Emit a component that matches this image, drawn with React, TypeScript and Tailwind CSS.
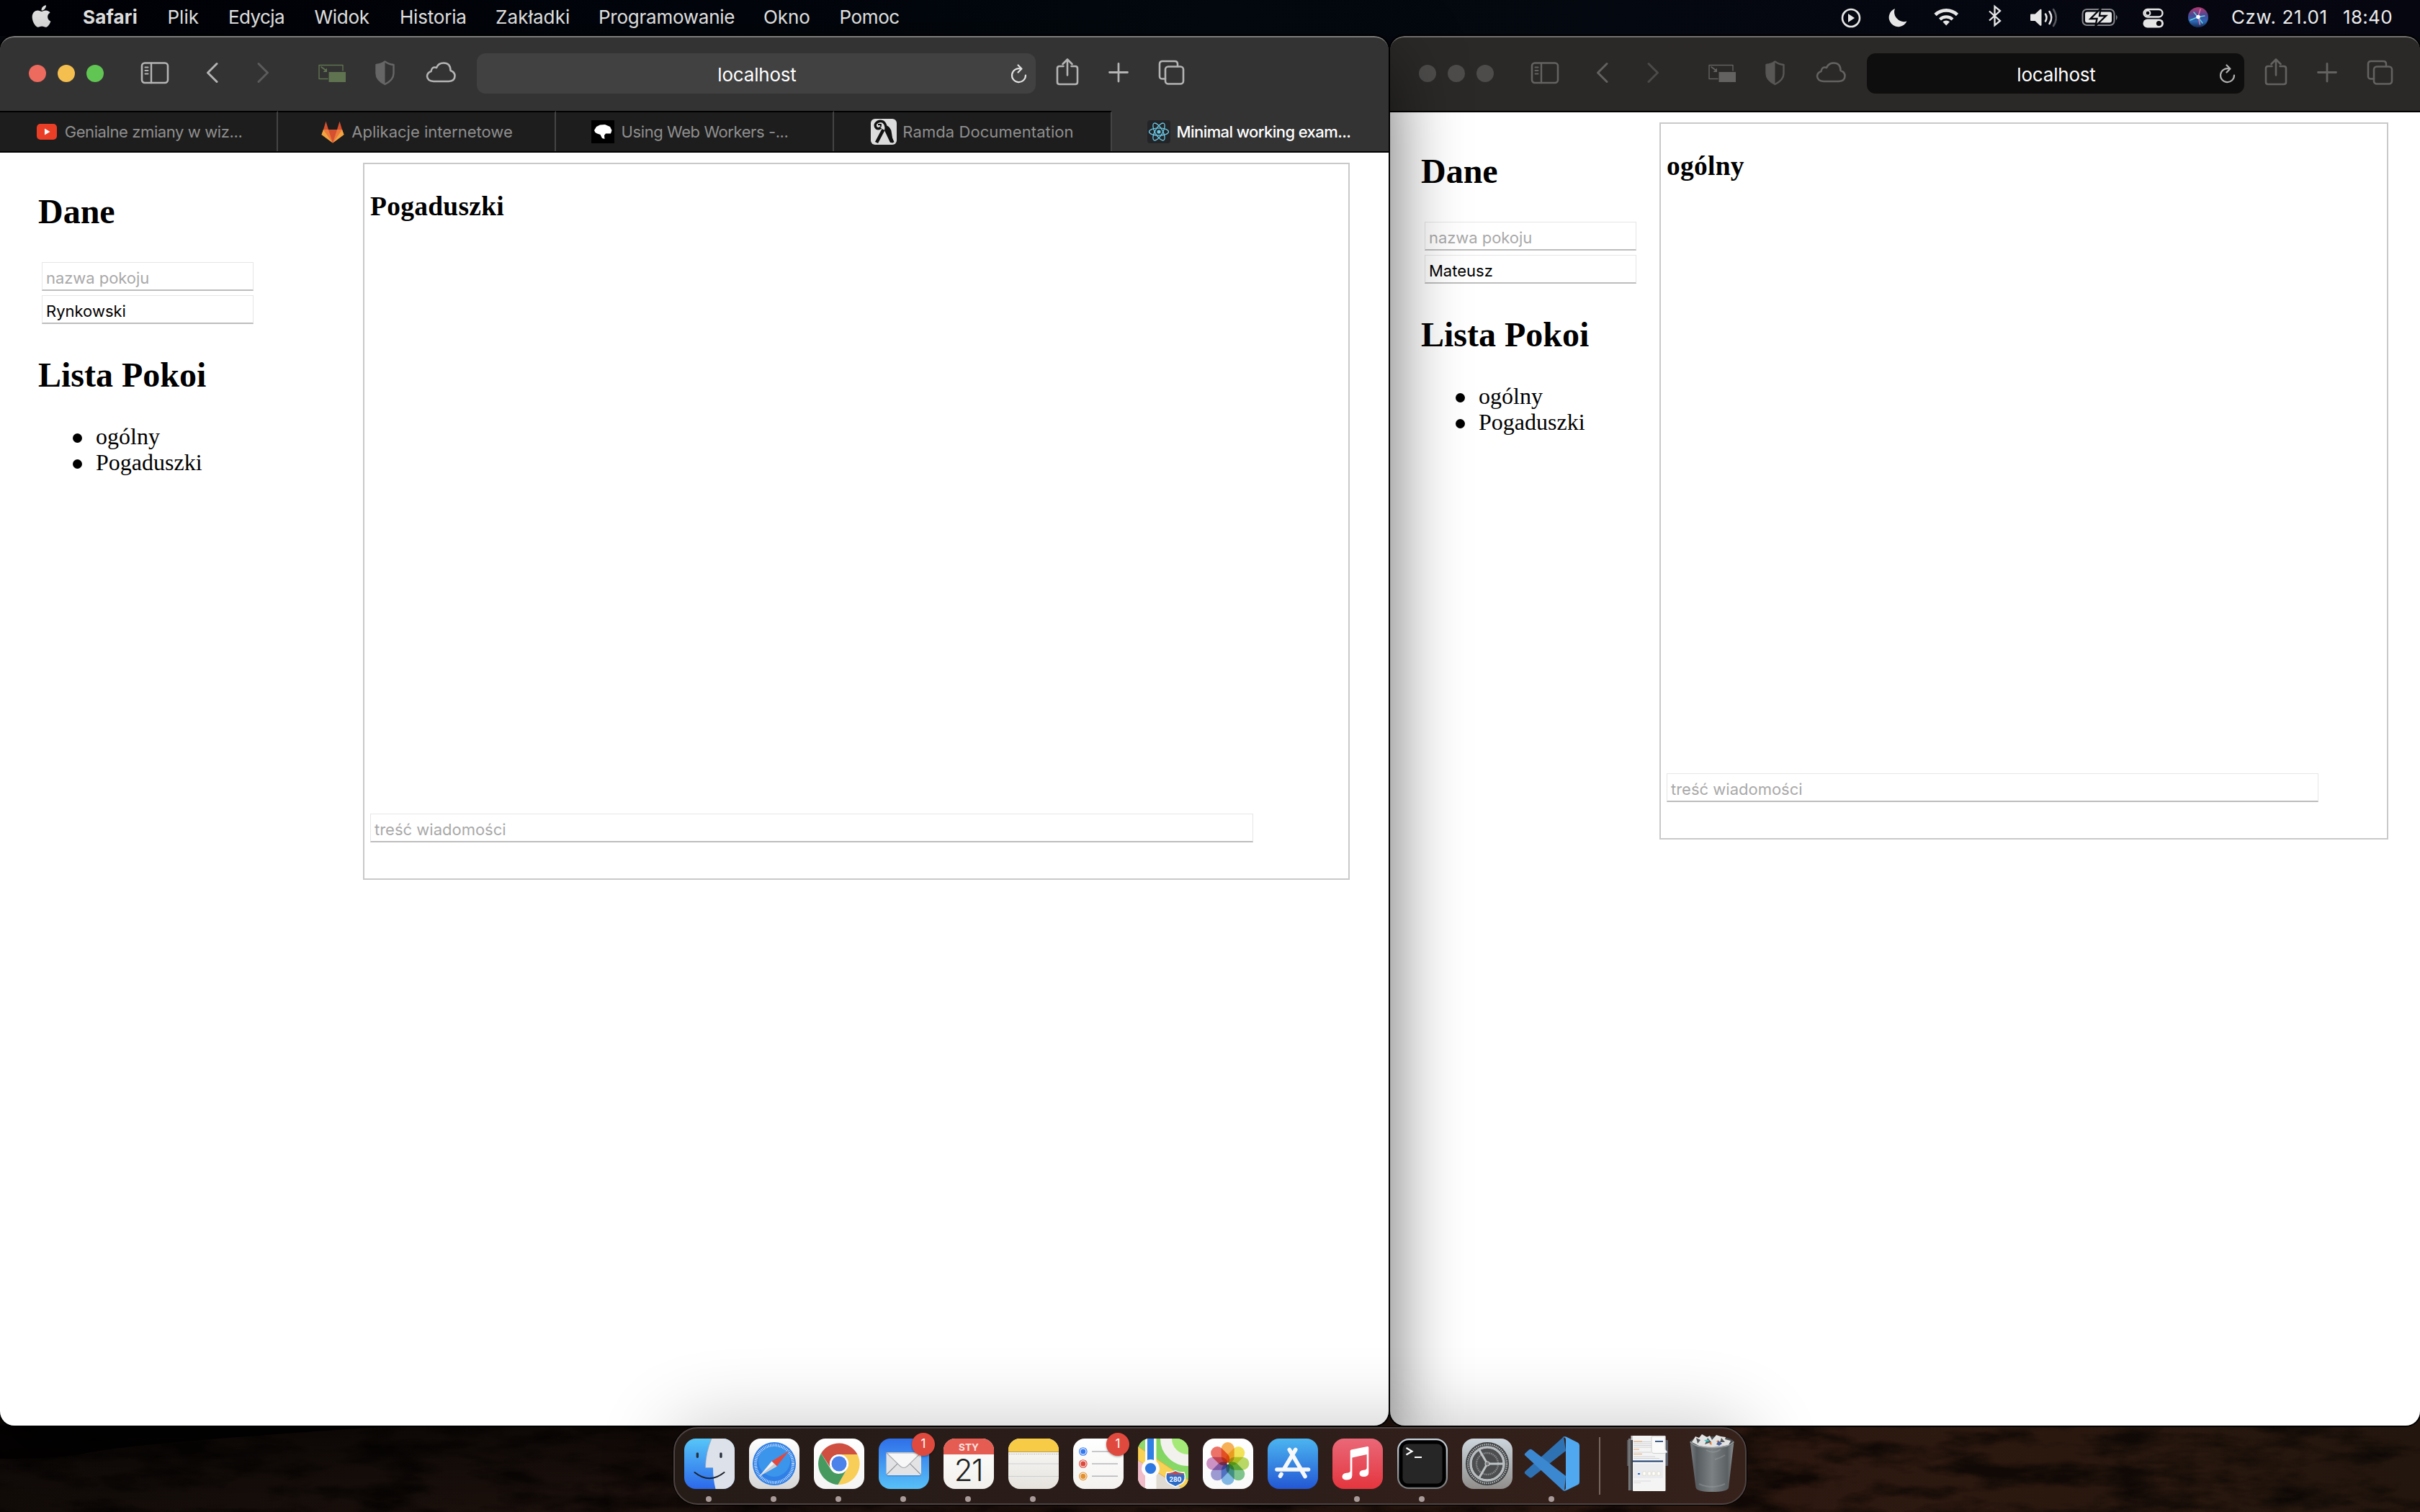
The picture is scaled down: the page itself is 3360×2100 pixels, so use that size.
import type { ReactNode } from "react";
import { FaApple } from "react-icons/fa";

/* ---------- Menu bar ---------- */

const menus: [string, string][] = [
  ["Plik", "w-[84.5px]"],
  ["Edycja", "w-[119.5px] tracking-[-0.6px]"],
  ["Widok", "w-[118.5px] tracking-[-0.3px]"],
  ["Historia", "w-[133px] tracking-[-0.2px]"],
  ["Zakładki", "w-[143px] tracking-[0.1px]"],
  ["Programowanie", "w-[229px] tracking-[-0.25px]"],
  ["Okno", "w-[105.5px] tracking-[-0.1px]"],
  ["Pomoc", "w-[100px] tracking-[-0.4px]"],
];

function StatusIcons() {
  return (
    <svg className="h-[47px] w-[520px] shrink-0" viewBox="2550 0 520 47" fill="none" stroke="#e6e6e6">
      <circle cx="2570" cy="25" r="12" strokeWidth="2.6" />
      <path d="M2566 19 L2575 25 L2566 31 Z" fill="#e6e6e6" stroke="none" />
      <path d="M2631 12 A13 13 0 1 0 2647.5 29.5 A13.5 13.5 0 0 1 2631 12 Z" fill="#e6e6e6" stroke="none" />
      <path d="M2687 20.5 A22 22 0 0 1 2717.500 20.500" strokeWidth="4.600" />
      <path d="M2693.500 27 A12.500 12.500 0 0 1 2711 27" strokeWidth="4.200" />
      <path d="M2702.2 35.500 L2697.400 30.300 A7.500 7.500 0 0 1 2707 30.300 Z" fill="#e6e6e6" stroke="none" />
      <path d="M2762 15.500 L2777 29 L2769.500 35 V9 L2777 15 L2762 28.500" strokeWidth="2.300" />
      <path d="M2820 19.500 h5.500 l7 -6.500 q2 -1 2 1 v20.500 q0 2 -2 1 l-7 -6.500 h-5.500 q-1 0 -1 -1 v-7.500 q0 -1 1 -1z" fill="#e6e6e6" stroke="none" />
      <path d="M2840 19.500 q3 5 0 10" strokeWidth="2.600" strokeLinecap="round" />
      <path d="M2845.500 16 q5.500 8.500 0 17" strokeWidth="2.600" strokeLinecap="round" />
      <path d="M2851 13 q7.500 11.500 0 23" strokeWidth="2.600" strokeLinecap="round" stroke="#55575c" />
      <rect x="2891.500" y="13" width="44" height="22" rx="6" strokeWidth="2" stroke="#85868a" />
      <path d="M2938 20.500 q3.500 3.500 0 7.500z" fill="#85868a" stroke="none" />
      <rect x="2895" y="16.500" width="37" height="15" rx="3" fill="#e6e6e6" stroke="none" />
      <path d="M2916.500 12 L2902.500 26 H2911.500 L2909.500 36 L2924 22 H2915 Z" fill="#e6e6e6" stroke="#05070d" strokeWidth="2.400" />
      <rect x="2976.500" y="13" width="26" height="10.500" rx="5.200" strokeWidth="2.400" />
      <circle cx="2982" cy="18.200" r="3.400" strokeWidth="2" />
      <rect x="2975.500" y="26.500" width="28.500" height="12" rx="6" fill="#e6e6e6" stroke="none" />
      <circle cx="2997.500" cy="32.500" r="3.600" fill="#07060c" stroke="none" />
      <defs>
        <linearGradient id="siri" x1="0" y1="0" x2="0" y2="1">
          <stop offset="0" stopColor="#b5376d" />
          <stop offset="0.400" stopColor="#4b4796" />
          <stop offset="0.700" stopColor="#2c67b4" />
          <stop offset="1" stopColor="#182a52" />
        </linearGradient>
      </defs>
      <circle cx="3052" cy="24" r="14" fill="url(#siri)" stroke="none" />
      <path d="M3041 28 L3052 23.500 L3061 22 M3046 17 L3052 24 L3058 32" stroke="#63d6dd" strokeWidth="1.400" strokeLinecap="round" />
      <path d="M3055 13 L3052 23 L3054.500 34" stroke="#ea7bb6" strokeWidth="1.400" strokeLinecap="round" />
      <circle cx="3052" cy="23.500" r="2.800" fill="#ffffff" stroke="none" />
    </svg>
  );
}

function MenuBar() {
  return (
    <header className="flex h-[50px] items-center bg-linear-to-r from-[#010207] via-[#03090f] to-[#060611] pb-[3px] pl-[43px] text-[26px] leading-[47px] whitespace-nowrap text-[#ececec]">
      <FaApple className="mb-[3px] h-[35px] w-[29px] shrink-0 text-[#e6e6e6]" />
      <span className="ml-[43px] w-[117.500px] font-bold tracking-[0.200px]">Safari</span>
      {menus.map(([label, cls]) => (
        <span key={label} className={"shrink-0 " + cls}>{label}</span>
      ))}
      <span className="flex-1" />
      <StatusIcons />
      <span className="ml-[28px] w-[155px] tracking-[0.600px]">Czw. 21.01</span>
      <span className="w-[107px] tracking-[0.300px]">18:40</span>
    </header>
  );
}

/* ---------- Browser chrome ---------- */

type Tone = { icon: string; dim: string; pip: string; shield: string; reload: string };

const activeTone: Tone = { icon: "#b4b4b4", dim: "#5c5c5c", pip: "#5f7350", shield: "#666666", reload: "#e0e0e0" };
const idleTone: Tone = { icon: "#636261", dim: "#4c4b4a", pip: "#636261", shield: "#585756", reload: "#b0b0b0" };

function Glyph({ w, className, children }: { w: number; className: string; children: ReactNode }) {
  return (
    <svg className={"h-[44px] shrink-0 " + className} viewBox={`0 0 ${w} 44`} fill="none" strokeLinecap="round" strokeLinejoin="round">
      {children}
    </svg>
  );
}

function Toolbar({ tone, lights, address }: { tone: Tone; lights: string[]; address: string }) {
  return (
    <div className="flex h-[102px] items-center pb-[2px] pl-[40px]">
      <div className="flex gap-[16px]">
        {lights.map((c, i) => (
          <span key={i} className={"size-[24px] rounded-full " + c} />
        ))}
      </div>
      <Glyph w={40} className="ml-[51px] w-[40px]">
        <rect x="2" y="7.500" width="36" height="27.500" rx="4" stroke={tone.icon} strokeWidth="2.600" />
        <path d="M15 8 V35" stroke={tone.icon} strokeWidth="2.400" />
        <path d="M6.500 13.500 h4 M6.500 18 h4 M6.500 22.500 h4" stroke={tone.icon} strokeWidth="2" />
      </Glyph>
      <Glyph w={17} className="ml-[51px] w-[17px]">
        <path d="M15 8.500 L2.500 21 L15 33.500" stroke={tone.icon} strokeWidth="3" />
      </Glyph>
      <Glyph w={17} className="ml-[54px] w-[17px]">
        <path d="M2 8.500 L14.500 21 L2 33.500" stroke={tone.dim} strokeWidth="3" />
      </Glyph>
      <Glyph w={40} className="ml-[67px] w-[40px]">
        <path d="M14 29.500 H2 V10.500 H35 V18" stroke={tone.pip} strokeWidth="1.400" />
        <path d="M5 13 L12 18" stroke={tone.pip} strokeWidth="1.600" />
        <path d="M13 14.500 V20 H7.500 Z" fill={tone.pip} />
        <rect x="15.500" y="20" width="23.500" height="14" fill={tone.pip} />
      </Glyph>
      <Glyph w={29} className="ml-[39px] w-[29px]">
        <path d="M14.500 5.500 Q20 9.500 26.500 10 V22 Q26.500 31 14.500 37 Q2.500 31 2.500 22 V10 Q9 9.500 14.500 5.500 Z" stroke={tone.shield} strokeWidth="2.400" />
        <path d="M14.500 5.500 V37 Q2.500 31 2.500 22 V10 Q9 9.500 14.500 5.500 Z" fill={tone.shield} />
      </Glyph>
      <Glyph w={43} className="ml-[42px] w-[43px]">
        <path d="M11 33 H32 Q40.500 32.500 40.500 25.500 Q40.500 20 34.500 18 Q34.500 7.500 25 7.500 Q17.500 7.500 15 14 Q8.500 12 7.500 19 Q2 21 2 26 Q2.500 32.500 11 33 Z" stroke={tone.icon} strokeWidth="2.600" />
      </Glyph>
      <div className={"relative ml-[28px] flex h-[56px] shrink-0 items-center justify-center rounded-[12px] pt-[3px] pl-[2px] text-[26px] leading-[47px] tracking-[-0.200px] text-white " + address}>
        <span>localhost</span>
        <svg className="absolute top-[14px] right-[11px] h-[29px] w-[25px]" viewBox="0 0 25 29" fill="none" stroke={tone.reload} strokeWidth="2.200" strokeLinecap="round" strokeLinejoin="round">
          <path d="M14.500 7.300 A9.500 9.500 0 1 0 22 16.500" />
          <path d="M11.500 2.500 L16.500 7.500 L11.500 12.500" />
        </svg>
      </div>
      <Glyph w={32} className="ml-[28px] w-[32px]">
        <path d="M10.500 12 H5 Q2 12 2 15 V34 Q2 37 5 37 H27 Q30 37 30 34 V15 Q30 12 27 12 H21.500" stroke={tone.icon} strokeWidth="2.600" />
        <path d="M16 24.500 V2.500 M9.500 9 L16 2.500 L22.500 9" stroke={tone.icon} strokeWidth="2.600" />
      </Glyph>
      <Glyph w={28} className="ml-[41px] w-[28px]">
        <path d="M14 8.500 V33 M1.500 20.500 H26.500" stroke={tone.icon} strokeWidth="2.800" />
      </Glyph>
      <Glyph w={37} className="ml-[41px] w-[37px]">
        <path d="M10 29.500 H6 Q2 29.500 2 26 V9 Q2 5 6 5 H23 Q27 5 27 9 V12" stroke={tone.icon} strokeWidth="2.600" />
        <rect x="10" y="12.500" width="25" height="24" rx="4" stroke={tone.icon} strokeWidth="2.600" />
      </Glyph>
    </div>
  );
}

const YouTubeIcon = () => (
  <svg className="mr-[11px] h-[22px] w-[28px]" viewBox="0 0 28 22">
    <rect width="28" height="22" rx="5" fill="#ea3f26" />
    <path d="M11 6.500 L18.500 11 L11 15.500 Z" fill="#fff" />
  </svg>
);

const GitLabIcon = () => (
  <svg className="mr-[10px] h-[31px] w-[32px]" viewBox="0 0 32 31">
    <path d="M16 30.500 L0.500 19 L3 12 H29 L31.500 19 Z" fill="#e8753b" />
    <path d="M16 30.500 L0.500 19 L3 12 Z M16 30.500 L31.500 19 L29 12 Z" fill="#f2a441" />
    <path d="M16 30.500 L10 12 H3 Z M16 30.500 L22 12 H29 Z" fill="#ec7a3c" />
    <path d="M3 12 L6.500 0.500 L10 12 Z M29 12 L25.500 0.500 L22 12 Z M16 30.500 L10 12 H22 Z" fill="#d5502f" />
  </svg>
);

const MdnIcon = () => (
  <svg className="mr-[10px] size-[32px]" viewBox="0 0 32 32">
    <rect width="32" height="32" fill="#000" />
    <path d="M4 14 L7 9 L12 6.500 L19 6 L26 9 L28.500 14 L27 18.500 L20 18.500 L18 21 L18.500 26 L15 25 L12.500 20 L8 18.500 L5.500 17 Z" fill="#fff" />
  </svg>
);

const RamdaIcon = () => (
  <svg className="mr-[8px] size-[36px]" viewBox="0 0 36 36">
    <rect width="36" height="36" rx="6" fill="#dcdcdc" />
    <path d="M14 12 Q11 15 8 13 Q5 10 7 6.500 Q11 1.500 17 4 Q20 6 21 11 L31 33" fill="none" stroke="#111" strokeWidth="3.400" />
    <path d="M20 9 Q28 10 29 20 L31 33 H27 L19 16 Z" fill="#111" />
    <path d="M17.500 15 L8 33" stroke="#111" strokeWidth="4.600" />
    <path d="M10 8 h4 v3" fill="none" stroke="#111" strokeWidth="1.800" />
  </svg>
);

const ReactIcon = () => (
  <svg className="mr-[9px] size-[32px]" viewBox="0 0 32 32" fill="none" stroke="#6cc9e6" strokeWidth="1.300">
    <rect width="32" height="32" rx="4" fill="#222427" stroke="none" />
    <ellipse cx="16" cy="16" rx="13.500" ry="5.200" />
    <ellipse cx="16" cy="16" rx="13.500" ry="5.200" transform="rotate(60 16 16)" />
    <ellipse cx="16" cy="16" rx="13.500" ry="5.200" transform="rotate(120 16 16)" />
    <circle cx="16" cy="16" r="2.600" fill="#6cc9e6" stroke="none" />
  </svg>
);

function Tab({ icon, label, className }: { icon: ReactNode; label: string; className: string }) {
  return (
    <div className={"flex h-[56px] items-center justify-center text-[22px] leading-[30px] whitespace-nowrap " + className}>
      {icon}
      <span>{label}</span>
    </div>
  );
}

function TabStrip() {
  const idle = "w-[386px] shrink-0 border-t-2 border-r-2 border-t-black border-r-[#444444] bg-[#1d1d1d] text-[#8f8f8f] ";
  return (
    <div className="flex h-[56px]">
      <Tab icon={<YouTubeIcon />} label="Genialne zmiany w wiz..." className={idle + "pl-[3px] tracking-[-0.400px]"} />
      <Tab icon={<GitLabIcon />} label="Aplikacje internetowe" className={idle + "pl-[2px]"} />
      <Tab icon={<MdnIcon />} label="Using Web Workers -..." className={idle + "pr-[13px] tracking-[-0.420px]"} />
      <Tab icon={<RamdaIcon />} label="Ramda Documentation" className={idle + "tracking-[0.080px]"} />
      <Tab icon={<ReactIcon />} label="Minimal working exam..." className="flex-1 pt-[2px] pr-[4px] font-medium tracking-[-0.580px] text-white" />
    </div>
  );
}

/* ---------- Chat page ---------- */

function Field({ text, filled, width }: { text: string; filled?: boolean; width: string }) {
  return (
    <div className={"flex h-[40px] items-center border border-b-2 border-[#e6e6e6] border-b-[#bdbdbd] pt-[4px] pl-[5px] text-[22px] leading-[30px] " + width + (filled ? " text-black" : " text-[#a9a9a9]")}>
      {text}
    </div>
  );
}

function ChatPage({ user, room, sideWidth, boxWidth, messageWidth }: { user: string; room: string; sideWidth: string; boxWidth: string; messageWidth: string }) {
  return (
    <main className="flex flex-1 bg-white text-black">
      <aside className={"shrink-0 pt-[55px] font-['Liberation_Serif',serif] " + sideWidth}>
        <h2 className="text-[48px] leading-[54px] font-bold">Dane</h2>
        <div className="mt-[43px] ml-[5px] flex flex-col gap-[6px] font-['Inter',sans-serif]">
          <Field text="nazwa pokoju" width="w-[294px] tracking-[-0.050px]" />
          <Field text={user} filled width="w-[294px]" />
        </div>
        <h2 className="mt-[44px] text-[48px] leading-[54px] font-bold">Lista Pokoi</h2>
        <ul className="mt-[40px] text-[32px] leading-[36px]">
          {["ogólny", "Pogaduszki"].map((name) => (
            <li key={name} className="flex items-center pl-[47.500px]">
              <span className="mt-[4px] mr-[19.500px] size-[13px] rounded-full bg-black" />
              {name}
            </li>
          ))}
        </ul>
      </aside>
      <section className={"mt-[14px] flex h-[996px] flex-col justify-between border-2 border-[#c9c9c9] pt-[38px] pb-[50px] pl-[8px] " + boxWidth}>
        <h3 className="font-['Liberation_Serif',serif] text-[37.440px] leading-[42px] font-bold tracking-[0.300px]">{room}</h3>
        <Field text="treść wiadomości" width={messageWidth} />
      </section>
    </main>
  );
}

/* ---------- Dock ---------- */

function AppIcon({ id, from, to, children }: { id: string; from: string; to: string; children?: ReactNode }) {
  return (
    <svg className="size-[70px]" viewBox="0 0 70 70" fill="none">
      <defs>
        <linearGradient id={id + "-bg"} x1="0" y1="0" x2="0" y2="1">
          <stop offset="0" stopColor={from} />
          <stop offset="1" stopColor={to} />
        </linearGradient>
        <clipPath id={id + "-clip"}>
          <rect width="70" height="70" rx="16" />
        </clipPath>
      </defs>
      <g clipPath={`url(#${id}-clip)`}>
        <rect width="70" height="70" fill={`url(#${id}-bg)`} />
        {children}
      </g>
    </svg>
  );
}

const Finder = () => (
  <AppIcon id="finder" from="#56c6f8" to="#2c68ea">
    <path d="M38 0 Q29.500 20 29.500 40.500 H40 Q40 57 43.500 70 H70 V0 Z" fill="#dde1ea" />
    <path d="M38 0 Q29.500 20 29.500 40.500 H40" stroke="#8fa3bd" strokeWidth="0.700" />
    <rect x="16.700" y="19.500" width="3.300" height="7.500" rx="1.400" fill="#26303c" />
    <rect x="49.300" y="19.500" width="3.300" height="7.500" rx="1.400" fill="#26303c" />
    <path d="M14.500 47 Q35 63.500 55.500 47" stroke="#1c222b" strokeWidth="2" strokeLinecap="round" />
  </AppIcon>
);

const Safari = () => (
  <AppIcon id="safari" from="#ffffff" to="#d6d6d6">
    <circle cx="35" cy="35" r="30" fill="#2f7fe6" />
    <circle cx="35" cy="31" r="22" fill="#45a3ee" opacity="0.600" />
    <circle cx="35" cy="35" r="26" stroke="#dcebfb" strokeWidth="4" strokeDasharray="0.900 1.370" />
    <path d="M55.500 17 L38.500 38.500 L31.500 31.500 Z" fill="#e2483d" />
    <path d="M14 52.500 L31.500 31.500 L38.500 38.500 Z" fill="#f1f1f1" />
    <path d="M14 52.500 L35 35 L38.500 38.500 Z" fill="#c9ccd2" />
  </AppIcon>
);

const Chrome = () => (
  <AppIcon id="chrome" from="#ffffff" to="#f4f4f4">
    <path d="M10 20.500 A29 29 0 0 1 60.500 22 L35 22 A13 13 0 0 0 23.700 41.500 Z" fill="#cf4f41" />
    <path d="M60.500 22 A29 29 0 0 1 33.500 64 L46.300 41.500 A13 13 0 0 0 35 22 Z" fill="#f8cd58" />
    <path d="M33.500 64 A29 29 0 0 1 10 20.500 L23.700 43 A13 13 0 0 0 46.300 41.500 Z" fill="#469a60" />
    <circle cx="35" cy="35" r="13" fill="#fff" />
    <circle cx="35" cy="35" r="10.500" fill="#4c83ea" />
  </AppIcon>
);

const Mail = () => (
  <AppIcon id="mail" from="#2f6fe9" to="#58c1f8">
    <rect x="10.500" y="20.500" width="48.500" height="32" rx="3" fill="#1a4fa8" opacity="0.350" />
    <rect x="10.500" y="19" width="48.500" height="32" rx="2.500" fill="#e3e3e5" />
    <path d="M11 50 L28 33 M58.500 50 L41.500 33" stroke="#8f9196" strokeWidth="1.100" />
    <path d="M11 20 L30 38.500 Q34.700 42.500 39.500 38.500 L58.500 20 Z" fill="#f7f7f8" stroke="#a5a7ab" strokeWidth="1.100" />
  </AppIcon>
);

const Calendar = () => (
  <AppIcon id="calendar" from="#ffffff" to="#f1f0ec">
    <rect width="70" height="22" fill="#e55d52" />
    <text x="35" y="16.500" textAnchor="middle" fontFamily="Inter" fontSize="13.500" fontWeight="700" fill="#fbe3e0">STY</text>
    <text x="34.500" y="58.500" textAnchor="middle" fontFamily="Inter" fontSize="42" fontWeight="300" letterSpacing="-1.500" fill="#1f1f1f">21</text>
  </AppIcon>
);

const Notes = () => (
  <AppIcon id="notes" from="#fbfbfa" to="#e6e3dd">
    <rect width="70" height="18" fill="#f8cb47" />
    <path d="M0 18.500 H70" stroke="#b39b5a" strokeWidth="1" />
    <path d="M1 21.500 H70" stroke="#9b9b9b" strokeWidth="1" strokeDasharray="1 1.500" />
    <path d="M0 35 H70 M0 52.500 H70" stroke="#cfcfd3" strokeWidth="1" />
  </AppIcon>
);

const Reminders = () => (
  <AppIcon id="reminders" from="#ffffff" to="#f3f2ef">
    {[["#3478f0", 18], ["#dd4a3d", 35], ["#e3902f", 52.3]].map(([c, y]) => (
      <g key={c as string}>
        <circle cx="13.800" cy={y} r="5.300" stroke={c as string} strokeWidth="1.100" />
        <circle cx="13.800" cy={y} r="3.600" fill={c as string} />
        <path d={`M26 ${y} H62`} stroke="#b6b7ba" strokeWidth="1.400" />
      </g>
    ))}
  </AppIcon>
);

const Maps = () => (
  <AppIcon id="maps" from="#7fd45f" to="#8edb6c">
    <circle cx="69" cy="0" r="24" fill="#a5ea78" />
    <circle cx="69" cy="0" r="30" stroke="#f3f1ee" strokeWidth="16" />
    <path d="M0 11 L70 58 V70 H0 Z" fill="#dfdbd2" />
    <path d="M0 0 H12 V30 L0 24 Z" fill="#8ed86c" />
    <path d="M0 11 L70 58 V74 L0 30 Z" fill="#f8d254" stroke="#e9ab3b" strokeWidth="1" />
    <path d="M0 31 L10 37 V70 H0 Z" fill="#f0bcc9" />
    <rect x="10" width="15.500" height="70" fill="#fbfafa" />
    <rect x="13" width="9" height="40" fill="#2f7fe4" />
    <circle cx="17.500" cy="41.500" r="12.500" fill="#fcfcfc" />
    <circle cx="17.500" cy="41.500" r="7.600" fill="#2e78e2" />
    <path d="M40 47 Q46 48 52 44.500 Q58 48 64 47 Q68 58 60 63 Q56 65 52 67 Q48 65 44 63 Q36 58 40 47 Z" fill="#2c6cc9" stroke="#fff" strokeWidth="1.400" />
    <path d="M41.500 50 Q40.500 48.500 41 48 Q47 49 52 46 Q57 49 63 48 L63.500 50 Z" fill="#d9443a" />
    <text x="52" y="59.500" textAnchor="middle" fontFamily="Inter" fontSize="8.600" fontWeight="700" fill="#fff">280</text>
  </AppIcon>
);

const petals = ["#f5a43c", "#f1e040", "#b0d44c", "#6cbd7c", "#6fb0e4", "#908dcf", "#c782bd", "#ec5c50"];

const Photos = () => (
  <AppIcon id="photos" from="#ffffff" to="#f9f9fa">
    {petals.map((c, i) => (
      <rect key={c} x="25.700" y="5" width="18" height="29.500" rx="9" fill={c} opacity="0.860" className="mix-blend-multiply" transform={`rotate(${i * 45} 34.7 34.7)`} />
    ))}
    <circle cx="34.700" cy="34.700" r="1.200" fill="#fff" />
  </AppIcon>
);

const AppStore = () => (
  <AppIcon id="appstore" from="#4bb5f0" to="#2357d4">
    <g stroke="#f6f8fb" strokeWidth="5.600" strokeLinecap="round">
      <path d="M38.700 15.500 L23.500 41" />
      <path d="M19 49.500 L17.500 52" />
      <path d="M30.300 15.500 L52 52.500" />
      <path d="M13 43 H56.500" />
    </g>
  </AppIcon>
);

const Music = () => (
  <AppIcon id="music" from="#ea6878" to="#e4353e">
    <path d="M24.700 17 Q24.700 16 26 15.500 L48.500 11 Q50.300 10.700 50.300 12.500 V47 Q50.500 52.500 44 53 Q37.500 53 37.500 48.500 Q37.500 44.500 43 43.700 Q47.700 43.500 47.700 41 V22 L27.400 26.500 V51 Q27.400 57.500 20 57.500 Q13.500 57.500 13.500 52.500 Q14 48.500 19.500 47.700 Q24.700 47.500 24.700 45 Z" fill="#fff" />
  </AppIcon>
);

const Terminal = () => (
  <AppIcon id="terminal" from="#c9d5de" to="#77787a">
    <rect x="2.300" y="2.300" width="65.400" height="65.400" rx="13.500" fill="#000" />
    <rect x="7.500" y="7.500" width="55" height="55" rx="7" fill="#262626" />
    <path d="M12.500 13 L20.500 17.700 L12.500 22.500" stroke="#fff" strokeWidth="2.200" />
    <path d="M24 26 H34" stroke="#fff" strokeWidth="2.200" />
  </AppIcon>
);

const Settings = () => (
  <AppIcon id="settings" from="#ccd6dd" to="#908e8b">
    <circle cx="35" cy="35" r="30" fill="#3b3d3f" />
    <circle cx="35" cy="35" r="27" stroke="#a9acae" strokeWidth="2.600" strokeDasharray="1.600 1.230" />
    <circle cx="35" cy="35" r="23" stroke="#b9bcbe" strokeWidth="3.600" />
    <circle cx="35" cy="35" r="21" fill="#4c4e50" />
    <circle cx="35" cy="35" r="15" stroke="#858789" strokeWidth="2.400" strokeDasharray="1.600 1" />
    <circle cx="35" cy="35" r="12" fill="#4b4d4f" />
    <path d="M35 35 H57 M35 35 L24 16 M35 35 L24 54" stroke="#c0c3c5" strokeWidth="3" />
    <circle cx="35" cy="35" r="3" fill="#77797b" stroke="#c6c8ca" strokeWidth="1.200" />
  </AppIcon>
);

const VsCode = () => (
  <svg className="h-[78px] w-[78px] shrink-0" viewBox="0 0 78 78">
    <path d="M1.500 49.500 L55 1.500 L58 21 L11.500 57.500 Q9 59.500 7 57.500 L1.500 53 Q0 51.300 1.500 49.500 Z" fill="#2f72b4" />
    <path d="M1.500 27.500 Q0 26 1.500 24.500 L7 19.500 Q9 18 11.500 19.800 L58 56 L56 76.700 L53.500 75.500 Z" fill="#3c88d0" />
    <path d="M53.500 2.500 Q55.500 0.500 58.500 1.500 L74.500 9.500 Q77 10.800 77 13.500 V64.500 Q77 67 74.500 68.300 L58.500 76 Q55.500 77.200 53.500 75.300 Q58 76.500 58 72 V6 Q58 1.500 53.500 2.500 Z" fill="#4fa8f0" />
  </svg>
);

const Documents = () => (
  <svg className="ml-[2px] h-[80px] w-[60px] shrink-0" viewBox="0 0 60 80" fill="none">
    <defs>
      <linearGradient id="doc-edge" x1="0" y1="0" x2="1" y2="0">
        <stop offset="0" stopColor="#8b8b8d" />
        <stop offset="1" stopColor="#0d0f14" />
      </linearGradient>
    </defs>
    <rect x="1" y="7" width="6" height="36" fill="#56555a" />
    <rect x="3" y="5" width="8" height="72" fill="url(#doc-edge)" />
    <rect x="52" y="7" width="6" height="36" rx="1" fill="#5a5d68" />
    <rect x="6.500" y="1" width="6" height="6" fill="#c9c9c9" />
    <rect x="9" y="1" width="45.500" height="77" rx="1" fill="#f4f4f5" />
    <path d="M10 9.500 H34 M10 12 H36 M10 14.500 H35 M10 17 H36 M10 24 H34 M10 30 H40 M10 32.500 H46" stroke="#cccdd0" strokeWidth="0.900" />
    <path d="M10 9 H22 M10 20 H18 M10 26.500 H22" stroke="#e6a66a" strokeWidth="1" />
    <rect x="9" y="35.500" width="42" height="2" fill="#1c3d70" />
    <rect x="9.500" y="40" width="41.500" height="20" fill="#eaebee" />
    <path d="M23 51 h4 v5 h-4z M30 51 h4 v5 h-4z M36 51 h4 v5 h-4z M43 51 h4 v5 h-4z" fill="#fff" stroke="#dcd3bb" strokeWidth="0.600" />
    <rect x="16" y="53" width="3" height="2" fill="#2c6cc9" />
    <path d="M10 64 H34 M10 66.500 H20" stroke="#d3d4d6" strokeWidth="0.800" />
    <path d="M35 2 H54 V20 L57 24 L53 25.500 H38 Q35 25.500 35 22.500 Z" fill="#fafafa" stroke="#c5c5c7" strokeWidth="0.800" />
    <rect x="40" y="8" width="11" height="1.800" fill="#284a7c" />
  </svg>
);

const Trash = () => (
  <svg className="mb-[3px] h-[82px] w-[64px] shrink-0" viewBox="0 0 64 82">
    <defs>
      <linearGradient id="bin" x1="0" y1="0" x2="1" y2="0">
        <stop offset="0" stopColor="#7b8186" />
        <stop offset="0.150" stopColor="#565b5f" />
        <stop offset="0.500" stopColor="#7c8184" />
        <stop offset="0.850" stopColor="#5b6063" />
        <stop offset="1" stopColor="#8d9296" />
      </linearGradient>
    </defs>
    <path d="M1.500 11 Q32 4 62.500 11 L55 75 Q54 81 32 81 Q11 81 9.500 75 Z" fill="url(#bin)" />
    <ellipse cx="32" cy="12" rx="30.500" ry="8" fill="#4c5053" />
    <path d="M4 12 L9 4 L14 6 L18 1 L25 5 L29 3 L32 9 L38 2 L44 4 L51 5 L50 8 L58 10 L55 16 L44 18 L30 19.500 L14 17 Z" fill="#e3e3e3" />
    <path d="M10 6 L16 9 L12 14 Z M26 6 L31 12 L22 15 Z M45 6 L50 12 L43 12 Z" fill="#55585b" />
    <path d="M21 9 L27 8.500 L28 10.500 L24 11.500 Z" fill="#3fc7c2" />
    <path d="M28 14 L31 11 L31.500 16 Z M38 11 L41 9 L41.500 13 Z" fill="#dd7a3a" />
    <path d="M41 10 L46 14 L42 17 L38 15 Z" fill="#4a5f94" />
    <path d="M2 11.500 Q8 19.500 32 19.500 Q56 19.500 62 11.500" fill="none" stroke="#9da2a5" strokeWidth="1.300" />
    <path d="M24 23 Q34 29 44 22 M36 36 Q44 34 50 30 M14 70 Q32 78 50 70" fill="none" stroke="#a5aaad" strokeWidth="2" opacity="0.350" />
  </svg>
);

function DockCell({ children, running, badge }: { children: ReactNode; running?: boolean; badge?: string }) {
  return (
    <div className="relative flex h-full w-[90px] shrink-0 flex-col items-center">
      <div className="mt-[14px] flex h-[70px] items-center justify-center">{children}</div>
      {running && <span className="mt-[10px] mr-[2px] size-[8px] rounded-full bg-[#a89a98]" />}
      {badge && (
        <span className="absolute top-[6px] left-[56px] flex size-[32px] items-center justify-center rounded-full bg-[#e04a3e] text-[17px] text-white shadow-[0_1px_3px_rgba(0,0,0,0.4)]">{badge}</span>
      )}
    </div>
  );
}

function Dock() {
  return (
    <div className="relative z-20 flex h-[108px] w-[1490px] rounded-[34px] border-2 border-[#4d4341] bg-linear-to-r from-[#251b17] via-[#2c1d1a] to-[#36211b] pl-[3px] shadow-[0_0_0_1px_#000000,0_0_110px_rgba(0,0,0,0.24)]">
      <DockCell running><Finder /></DockCell>
      <DockCell running><Safari /></DockCell>
      <DockCell running><Chrome /></DockCell>
      <DockCell running badge="1"><Mail /></DockCell>
      <DockCell running><Calendar /></DockCell>
      <DockCell running><Notes /></DockCell>
      <DockCell badge="1"><Reminders /></DockCell>
      <DockCell><Maps /></DockCell>
      <DockCell><Photos /></DockCell>
      <DockCell><AppStore /></DockCell>
      <DockCell running><Music /></DockCell>
      <DockCell running><Terminal /></DockCell>
      <DockCell><Settings /></DockCell>
      <DockCell running><VsCode /></DockCell>
      <div className="flex w-[42px] shrink-0 justify-center pt-[12px]">
        <span className="h-[80px] w-[2px] bg-[#76645f]" />
      </div>
      <DockCell><Documents /></DockCell>
      <DockCell><Trash /></DockCell>
    </div>
  );
}

function Wallpaper() {
  return (
    <svg className="absolute inset-0 h-full w-full" viewBox="0 0 3360 160" preserveAspectRatio="none">
      <defs>
        <linearGradient id="rock" x1="0" y1="0" x2="1" y2="0">
          <stop offset="0" stopColor="#120c09" />
          <stop offset="0.250" stopColor="#1c110d" />
          <stop offset="0.700" stopColor="#2e1911" />
          <stop offset="0.850" stopColor="#2a180f" />
          <stop offset="1" stopColor="#23160e" />
        </linearGradient>
        <filter id="grain" x="0" y="0" width="100%" height="100%">
          <feTurbulence type="fractalNoise" baseFrequency="0.010 0.032" numOctaves="6" seed="23" />
          <feColorMatrix values="0 0 0 0 0  0 0 0 0 0  0 0 0 0 0  3 0 0 0 -1.250" />
        </filter>
      </defs>
      <rect width="3360" height="160" fill="url(#rock)" />
      <rect width="3360" height="160" filter="url(#grain)" opacity="0.600" />
      <path d="M0 40 H560 Q400 50 280 60 T120 78 T0 86 Z" fill="#020101" opacity="0.850" />
    </svg>
  );
}

/* ---------- Desktop ---------- */

export default function App() {
  return (
    <div className="relative flex h-[2100px] w-[3360px] flex-col overflow-hidden bg-[#04070d] font-['Inter',sans-serif]">
      <div className="absolute inset-x-0 bottom-0 h-[160px]">
        <Wallpaper />
      </div>
      <MenuBar />
      <div className="relative flex h-[1930px] gap-[2px]">
        <div className="relative z-10 flex w-[1928px] shrink-0 flex-col overflow-hidden rounded-[20px] bg-[#333333] shadow-[0_0_0_2px_#000000,0_36px_100px_rgba(0,0,0,0.62)]">
          <div className="rounded-t-[20px] border-t-2 border-[#7c7c7c]">
            <Toolbar tone={activeTone} lights={["bg-[#ec6a5e]", "bg-[#f4bf4f]", "bg-[#61c554]"]} address="w-[776px] bg-[#414141]" />
          </div>
          <TabStrip />
          <div className="h-[2px] bg-black" />
          <ChatPage user="Rynkowski" room="Pogaduszki" sideWidth="w-[504px] pl-[53px]" boxWidth="w-[1370px]" messageWidth="w-[1226px]" />
        </div>
        <div className="relative flex flex-1 flex-col overflow-hidden rounded-[20px] bg-[#2a2927] shadow-[0_0_0_2px_#000000]">
          <div className="rounded-t-[20px] border-t-2 border-[#72716f]">
            <Toolbar tone={idleTone} lights={["bg-[#4d4c4b]", "bg-[#4d4c4b]", "bg-[#4d4c4b]"]} address="w-[524px] bg-[#0e0e0e]" />
          </div>
          <div className="h-[2px] bg-black" />
          <ChatPage user="Mateusz" room="ogólny" sideWidth="w-[374px] pl-[43px]" boxWidth="w-[1012px]" messageWidth="w-[905px]" />
        </div>
      </div>
      <div className="flex h-[120px] justify-center pt-[2px]">
        <Dock />
      </div>
    </div>
  );
}
